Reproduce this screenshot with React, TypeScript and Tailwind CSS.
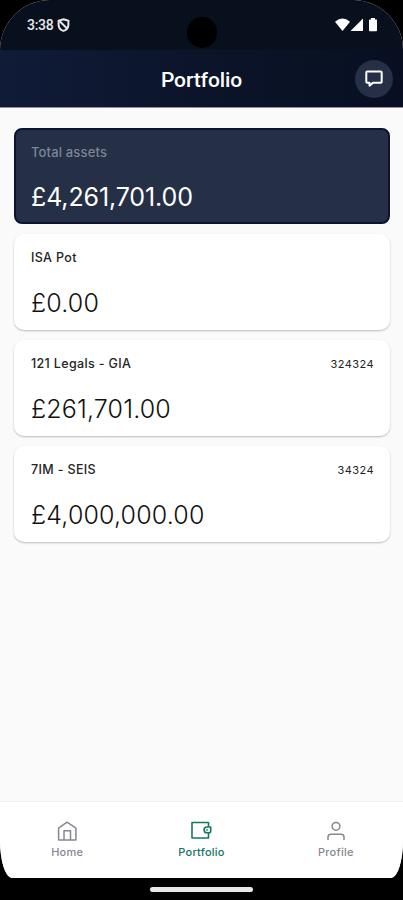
const accounts = [
  { name: "ISA Pot", reference: "", value: "£0.00" },
  { name: "121 Legals - GIA", reference: "324324", value: "£261,701.00" },
  { name: "7IM - SEIS", reference: "34324", value: "£4,000,000.00" },
];

const HomeIcon = () => (
  <svg
    className="w-5 h-5"
    viewBox="0 0 20 20"
    fill="none"
    stroke="currentColor"
    strokeWidth="1.5"
    strokeLinejoin="round"
  >
    <path d="M1.600 19V7.200L10 1.200l8.900 6V19z" />
    <path d="M7 19V9.800h6.500V19" />
  </svg>
);

const WalletIcon = () => (
  <svg
    className="w-[22px] h-5"
    viewBox="0 0 22 20"
    fill="none"
    stroke="currentColor"
    strokeWidth="1.6"
    strokeLinejoin="round"
  >
    <path d="M18.500 5.500V1.500H2v15.500h16.500v-5" />
    <path d="M20.700 6H17a2.900 2.900 0 0 0 0 5.800h2q1.700 0 1.700-1.700z" />
    <path d="M17 8.200v1.500" />
  </svg>
);

const ProfileIcon = () => (
  <svg
    className="w-5 h-5"
    viewBox="0 0 20 20"
    fill="none"
    stroke="currentColor"
    strokeWidth="1.5"
  >
    <circle cx="10" cy="5.300" r="3.900" />
    <path d="M2 19v-2.800a3 3 0 0 1 3-3h10a3 3 0 0 1 3 3V19" />
  </svg>
);

const tabs = [
  { label: "Home", icon: HomeIcon, active: false },
  { label: "Portfolio", icon: WalletIcon, active: true },
  { label: "Profile", icon: ProfileIcon, active: false },
];

const StatusBar = () => (
  <div className="relative flex h-[50px] items-center justify-between bg-[#080f1d] pl-[27px] pr-[25px] text-[#e8e8e8]">
    <div className="flex items-center gap-1">
      <span className="font-[Roboto,sans-serif] text-[14px] font-medium leading-4 tracking-[-0.3px]">
        3:38
      </span>
      <svg
        className="h-[14px] w-[13px]"
        viewBox="0 0 13 14"
        fill="none"
        stroke="currentColor"
        strokeWidth="2"
      >
        <path d="M6.500 1.200l4.900 1.500v4c0 3-2 5.200-4.900 6.200-2.900-1-4.900-3.200-4.900-6.200v-4z" />
        <path d="M2.500 3l8 8" />
      </svg>
    </div>
    <div className="absolute left-[187px] top-[17px] h-[31px] w-[30px] rounded-full bg-black" />
    <svg className="h-[14px] w-[43px] text-white" viewBox="0 0 43 14" fill="currentColor">
      <path d="M0 3.800Q7.500-2.600 15 3.800L7.500 13z" />
      <path d="M28 .5V13H15.500z" />
      <path d="M36 0h4v1.500h1.500Q42 1.500 42 2.200v10.300q0 .8-.8.800h-6.400q-.8 0-.8-.8V2.200q0-.7.700-.7H36z" />
    </svg>
  </div>
);

const Header = () => (
  <header className="relative flex h-[57px] items-center justify-center bg-linear-to-r from-[#101b38] via-[#0b1429] to-[#080f22] pt-0.5">
    <h1 className="font-[Roboto,sans-serif] text-[21px] font-medium leading-6 tracking-[-0.1px] text-white">
      Portfolio
    </h1>
    <button
      aria-label="Messages"
      className="absolute right-[10px] top-[10px] flex h-[38px] w-[38px] items-center justify-center rounded-full bg-[#252f45] text-white"
    >
      <svg
        className="h-[18px] w-[18px]"
        viewBox="0 0 18 18"
        fill="none"
        stroke="currentColor"
        strokeWidth="2"
        strokeLinejoin="round"
      >
        <path d="M2.300 1.500h13.400q1 0 1 1v9.200q0 1-1 1H8l-3.500 3v-3H2.300q-1 0-1-1V2.500q0-1 1-1z" />
      </svg>
    </button>
  </header>
);

export default function App() {
  return (
    <div className="h-[900px] w-full overflow-hidden bg-black font-[Inter,sans-serif]">
      <div className="flex h-[878px] flex-col overflow-hidden rounded-t-[50px] bg-[#fafafa] [border-bottom-left-radius:12px_38px] [border-bottom-right-radius:12px_38px]">
        <StatusBar />
        <Header />
        <main className="flex flex-1 flex-col gap-[10px] border-t border-[#8d8f96] pl-[14px] pr-[13px] pt-5">
          <section className="h-24 rounded-lg border-2 border-[#0c1230] bg-[#252f46] px-[15px] pt-[14px]">
            <h2 className="text-[13px] font-medium leading-4 tracking-[0.15px] text-[#7c8599]">
              Total assets
            </h2>
            <p className="mt-[22px] text-[25px] leading-[30px] tracking-[-0.12px] text-white">
              £4,261,701.00
            </p>
          </section>
          {accounts.map((account) => (
            <section
              key={account.name}
              className="h-24 rounded-[10px] bg-white px-[17px] pt-4 shadow-[0_1px_2px_rgba(0,0,0,0.25)]"
            >
              <div className="flex items-center justify-between leading-4 text-[#242424]">
                <h2 className="text-[12.500px] font-medium tracking-[0.35px]">
                  {account.name}
                </h2>
                <span className="-mr-px text-[11px] tracking-[0.45px]">
                  {account.reference}
                </span>
              </div>
              <p className="mt-[22px] text-[25px] font-light leading-[30px] tracking-[0.15px] text-[#111]">
                {account.value}
              </p>
            </section>
          ))}
        </main>
        <nav className="grid h-[77px] shrink-0 grid-cols-3 border-t border-[#f0f0f0] bg-white pt-[19px]">
          {tabs.map(({ label, icon: Icon, active }) => (
            <a
              key={label}
              className={`flex flex-col items-center gap-[3px] text-[11px] font-medium leading-4 tracking-[0.25px] ${active ? "text-[#137562]" : "text-[#858792]"}`}
            >
              <Icon />
              <span>{label}</span>
            </a>
          ))}
        </nav>
      </div>
      <div className="mx-auto mt-[9px] h-[5px] w-[103px] rounded-full bg-[#e8e8e8]" />
    </div>
  );
}
